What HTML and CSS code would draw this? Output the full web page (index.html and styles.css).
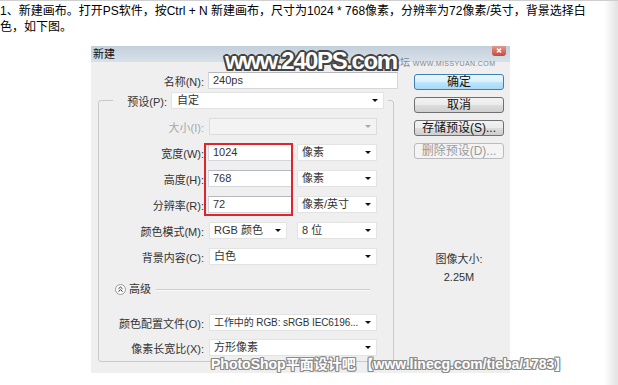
FILE: index.html
```html
<!DOCTYPE html>
<html lang="zh-CN">
<head>
    <meta charset="UTF-8">
    <title>新建画布</title>
    <link rel="stylesheet" href="styles.css">
</head>
<body>
    <div class="post">1、新建画布。打开PS软件，按Ctrl + N 新建画布，尺寸为1024 * 768像素，分辨率为72像素/英寸，背景选择白<br>色，如下图。</div>

    <div class="shot">
        <div class="titlebar">新建</div>
        <div class="close-btn">
            <svg width="14" height="10" viewBox="0 0 14 10"><path d="M5 2.5 L9 6.5 M9 2.5 L5 6.5" stroke="#fff" stroke-width="1.6"/></svg>
        </div>

        <div class="dlg-body">
            <div class="form-col">
                <div class="name-row">
                    <span class="lbl lbl-name">名称(N):</span>
                    <div class="field w-name">240ps</div>
                </div>

                <fieldset class="group">
                    <legend class="preset">
                        <span class="lbl lbl-preset">预设(P):</span>
                        <div class="field combo w-preset">自定<i class="arrow"></i></div>
                    </legend>

                    <div class="row">
                        <span class="lbl disabled">大小(I):</span>
                        <div class="field combo off w-wide"><i class="arrow"></i></div>
                    </div>
                    <div class="row">
                        <span class="lbl">宽度(W):</span>
                        <div class="field w-num">1024</div>
                        <div class="field combo w-unit">像素<i class="arrow"></i></div>
                    </div>
                    <div class="row">
                        <span class="lbl">高度(H):</span>
                        <div class="field w-num">768</div>
                        <div class="field combo w-unit">像素<i class="arrow"></i></div>
                    </div>
                    <div class="row">
                        <span class="lbl">分辨率(R):</span>
                        <div class="field w-num">72</div>
                        <div class="field combo w-unit">像素/英寸<i class="arrow"></i></div>
                    </div>
                    <div class="row">
                        <span class="lbl">颜色模式(M):</span>
                        <div class="field combo w-mode">RGB 颜色<i class="arrow"></i></div>
                        <div class="field combo w-bits">8 位<i class="arrow"></i></div>
                    </div>
                    <div class="row">
                        <span class="lbl">背景内容(C):</span>
                        <div class="field combo w-wide">白色<i class="arrow"></i></div>
                    </div>

                    <div class="advanced">
                        <svg class="toggle" width="11" height="11" viewBox="0 0 11 11">
                            <circle cx="5.5" cy="5.5" r="5" fill="#fafafa" stroke="#9a9a9a"/>
                            <path d="M3.5 4.8 L5.5 3 L7.5 4.8 M3.5 7.5 L5.5 5.7 L7.5 7.5" fill="none" stroke="#333" stroke-width="1"/>
                        </svg>
                        <span class="adv-text">高级</span>
                        <span class="adv-line"></span>
                    </div>

                    <div class="row row-profile">
                        <span class="lbl">颜色配置文件(O):</span>
                        <div class="field combo w-wide"><span class="profile">工作中的 RGB: sRGB IEC6196...</span><i class="arrow"></i></div>
                    </div>
                    <div class="row row-aspect">
                        <span class="lbl">像素长宽比(X):</span>
                        <div class="field combo w-wide">方形像素<i class="arrow"></i></div>
                    </div>
                </fieldset>
            </div>

            <div class="btn-col">
                <div class="btn default">确定</div>
                <div class="btn">取消</div>
                <div class="btn">存储预设(S)...</div>
                <div class="btn off">删除预设(D)...</div>
                <div class="img-size">
                    <p>图像大小:</p>
                    <p class="size-val">2.25M</p>
                </div>
            </div>
        </div>

        <!-- annotation and watermarks lying over the screenshot -->
        <div class="red-box"></div>
        <div class="mark-forum">思缘设计论坛 <span>WWW.MISSYUAN.COM</span></div>
        <div class="mark-240">www.240PS.com</div>
        <div class="mark-linecg">PhotoShop平面设计吧 【www.linecg.com/tieba/1783】</div>
    </div>
</body>
</html>
```

FILE: styles.css
```css
html {
    background: linear-gradient(to right, #fff 0, #fff 604px, #e2e2e2 618px);
}
body {
    margin: 0;
    border-top: 1px solid #cfcfcf;
    font-family: "Liberation Sans", "Noto Sans CJK SC", sans-serif;
    color: #000;
}
.post {
    padding-top: 2px;
    font-size: 12px;
    line-height: 16px;
}
.shot {
    position: relative;
    width: 419px;
    height: 327px;
    margin: 11px 0 0 91px;
    background-color: #efefef;
    font-size: 11px;
    color: #333;
}
.titlebar {
    height: 16px;
    line-height: 16px;
    padding-left: 2px;
    font-size: 11px;
    color: #111;
    background: linear-gradient(#c3cfdb, #d8e1ea);
}
.close-btn {
    position: absolute;
    top: 0;
    right: 4px;
    width: 14px;
    height: 10px;
    border-radius: 0 0 3px 3px;
    background: linear-gradient(#e59a8c, #c4493a);
}
.close-btn svg {
    display: block;
}
.dlg-body {
    display: flex;
}
.form-col {
    width: 309px;
}
.lbl {
    box-sizing: border-box;
    flex: none;
    text-align: right;
    padding-right: 4px;
    white-space: nowrap;
}
.lbl.disabled {
    color: #a8a8a8;
}
.field {
    box-sizing: border-box;
    flex: none;
    height: 17px;
    line-height: 15px;
    padding-left: 4px;
    background-color: #fff;
    border: 1px solid #d3d6db;
    border-top-color: #b5b9bf;
    white-space: nowrap;
    overflow: hidden;
}
.combo {
    display: flex;
    align-items: center;
    padding-right: 5px;
    border-color: #e3e3e3;
}
.combo.off {
    background-color: #f3f3f3;
    border-color: #dcdcdc;
}
.arrow {
    flex: none;
    width: 0;
    height: 0;
    margin-left: auto;
    border-left: 3px solid transparent;
    border-right: 3px solid transparent;
    border-top: 3px solid #111;
}
.combo.off .arrow {
    border-top-color: #a8a8a8;
}
.profile {
    font-size: 10px;
    letter-spacing: -0.1px;
}
.name-row {
    display: flex;
    align-items: center;
    margin-top: 10px;
}
.lbl-name {
    width: 117px;
}
.w-name {
    width: 190px;
}
.group {
    box-sizing: border-box;
    width: 296px;
    min-width: 0;
    margin: 3px 0 0 7px;
    padding: 0 0 5px 0;
    border: 1px solid #c9c9c9;
    border-radius: 3px;
}
.preset {
    display: flex;
    align-items: center;
    margin-left: 14px;
    padding: 0 4px 0 0;
}
.lbl-preset {
    width: 58px;
}
.w-preset {
    width: 213px;
    padding-left: 5px;
}
.row {
    display: flex;
    align-items: center;
    height: 17px;
    margin-top: 9px;
}
.row .lbl {
    width: 109px;
}
.w-wide {
    width: 168px;
    margin-left: 1px;
}
.w-num {
    width: 84px;
}
.w-unit {
    width: 80px;
    margin-left: 5px;
}
.w-mode {
    width: 78px;
    margin-left: 1px;
}
.w-bits {
    width: 80px;
    margin-left: 10px;
}
.advanced {
    display: flex;
    align-items: center;
    height: 11px;
    margin: 19px 23px 0 16px;
}
.toggle {
    display: block;
    flex: none;
}
.adv-text {
    margin-left: 3px;
    line-height: 11px;
}
.adv-line {
    flex: 1;
    height: 0;
    margin-left: 5px;
    border-top: 1px solid #cdcdcd;
    border-bottom: 1px solid #fbfbfb;
}
.row-profile {
    margin-top: 19px;
}
.row-aspect {
    margin-top: 8px;
}
.btn-col {
    width: 90px;
    margin-left: 14px;
    padding-top: 12px;
}
.btn {
    box-sizing: border-box;
    height: 16px;
    line-height: 14px;
    margin-bottom: 7px;
    text-align: center;
    font-size: 12px;
    color: #111;
    border: 1px solid #707070;
    border-radius: 3px;
    background: linear-gradient(#f2f2f2 0, #ebebeb 50%, #dddddd 50%, #cfcfcf 100%);
}
.btn.default {
    border-color: #3c7fb1;
    background: linear-gradient(#eaf6fd 0, #d9f0fc 50%, #bee6fd 50%, #a7d9f5 100%);
}
.btn.off {
    color: #9a9a9a;
    border-color: #b8bcbf;
    background: #f4f4f4;
}
.img-size {
    margin-top: 93px;
    text-align: center;
    font-size: 11px;
    line-height: 14px;
    color: #333;
}
.img-size p {
    margin: 0;
}
.img-size .size-val {
    margin-top: 4px;
}
.red-box {
    position: absolute;
    left: 113px;
    top: 97px;
    width: 89px;
    height: 73px;
    box-sizing: border-box;
    border: 2px solid #e0242b;
}
.mark-forum {
    position: absolute;
    left: 259px;
    top: 11px;
    font-size: 10px;
    line-height: 12px;
    color: #7f8893;
    white-space: nowrap;
}
.mark-forum span {
    font-size: 7px;
    letter-spacing: 0.4px;
}
.mark-240 {
    position: absolute;
    left: 134px;
    top: 1px;
    font-size: 24px;
    line-height: 28px;
    font-weight: bold;
    letter-spacing: -1.4px;
    color: #fff;
    white-space: nowrap;
    text-shadow: -2px 0 #444, 2px 0 #444, 0 -2px #444, 0 2px #444,
        -1.5px -1.5px #444, 1.5px -1.5px #444, -1.5px 1.5px #444, 1.5px 1.5px #444;
}
.mark-linecg {
    position: absolute;
    left: 120px;
    top: 309px;
    font-size: 14px;
    line-height: 18px;
    font-weight: bold;
    color: #fff;
    white-space: nowrap;
    text-shadow: -1px 0 #8a8a8a, 1px 0 #8a8a8a, 0 -1px #8a8a8a, 0 1px #8a8a8a,
        -1px -1px #8a8a8a, 1px -1px #8a8a8a, -1px 1px #8a8a8a, 1px 1px #8a8a8a;
}
```
